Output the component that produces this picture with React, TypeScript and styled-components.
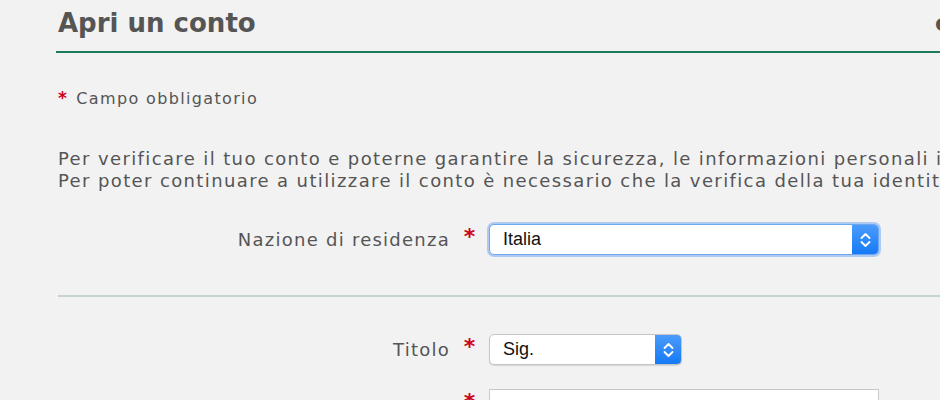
import styled, { createGlobalStyle } from "styled-components";

const GlobalStyle = createGlobalStyle`
  html, body {
    margin: 0;
    padding: 0;
    background: #f2f2f2;
    overflow: hidden;
  }
  body {
    font-family: "DejaVu Sans", Verdana, sans-serif;
    color: #555;
  }
`;

const Page = styled.div`
  width: 1100px;
  padding-left: 56px;
`;

const Header = styled.div`
  display: grid;
  grid-template-columns: 877px 1fr;
  align-items: start;
  height: 51px;
  border-bottom: 2px solid #1d7b5b;
  padding-left: 2px;
`;

const Title = styled.h1`
  margin: 8px 0 0;
  font-size: 26px;
  font-weight: bold;
  color: #555;
  white-space: nowrap;
`;

const Aside = styled.span`
  margin-top: 10px;
  font-size: 23px;
  font-weight: bold;
  color: #555;
  white-space: nowrap;
`;

const Content = styled.div`
  padding-left: 2px;
`;

const Star = styled.span`
  color: #d0021b;
  font-weight: bold;
  font-size: 17px;
  letter-spacing: 0;
  margin-right: 3px;
`;

const Required = styled.p`
  margin: 35px 0 0;
  font-size: 16px;
  line-height: 20px;
  letter-spacing: 1.35px;
`;

const Intro = styled.p`
  margin: 39px 0 0;
  font-size: 18px;
  line-height: 22px;
  letter-spacing: 1.38px;
  white-space: nowrap;
`;

const Row = styled.div<{ $top: number }>`
  display: grid;
  grid-template-columns: 392px 39px auto;
  align-items: center;
  margin-top: ${(p) => p.$top}px;
`;

const Label = styled.label`
  text-align: right;
  font-size: 18px;
  letter-spacing: 1.25px;
  color: #555;
  white-space: nowrap;
`;

const StarCell = styled.span`
  color: #d0021b;
  font-weight: bold;
  font-size: 22px;
  line-height: 22px;
  text-align: center;
  align-self: start;
  margin-top: 2px;
`;

const SelectBox = styled.div<{ $width: number; $focus?: boolean }>`
  display: flex;
  width: ${(p) => p.$width}px;
  height: 31px;
  box-sizing: border-box;
  background: #fff;
  border: 1px solid ${(p) => (p.$focus ? "#6fa6ef" : "#c6c6c6")};
  border-radius: 5px;
  box-shadow: ${(p) =>
    p.$focus
      ? "0 0 0 2px rgba(120,170,240,0.55)"
      : "0 1px 1px rgba(0,0,0,0.12)"};
  overflow: hidden;
  font-family: "Liberation Sans", Arial, sans-serif;
  font-size: 18px;
  color: #111;
`;

const SelectValue = styled.span`
  flex: 1;
  padding-left: 13px;
  line-height: 29px;
`;

const Arrow = styled.span`
  width: 26px;
  display: flex;
  align-items: center;
  justify-content: center;
  background: linear-gradient(#4b9bfb, #157af6);
`;

const Divider = styled.hr`
  margin: 40px 0 0;
  border: 0;
  height: 2px;
  background: #c5d4d0;
`;

const TextBox = styled.div`
  width: 390px;
  height: 32px;
  box-sizing: border-box;
  background: #fff;
  border: 1px solid #c9c9c9;
`;

const Chevrons = () => (
  <svg width="13" height="20" viewBox="0 0 13 20">
    <path
      d="M2.5 8 L6.5 4 L10.5 8 M2.5 12 L6.5 16 L10.5 12"
      fill="none"
      stroke="#fff"
      strokeWidth="1.8"
      strokeLinecap="round"
      strokeLinejoin="round"
    />
  </svg>
);

function App() {
  return (
    <Page>
      <GlobalStyle />
      <Header>
        <Title>Apri un conto</Title>
        <Aside>cambia lingua</Aside>
      </Header>
      <Content>
        <Required>
          <Star>*</Star> Campo obbligatorio
        </Required>
        <Intro>
          Per verificare il tuo conto e poterne garantire la sicurezza, le informazioni personali inserite saranno controllate.
          <br />
          Per poter continuare a utilizzare il conto è necessario che la verifica della tua identità venga completata.
        </Intro>
        <Row $top={32}>
          <Label>Nazione di residenza</Label>
          <StarCell>*</StarCell>
          <SelectBox $width={390} $focus>
            <SelectValue>Italia</SelectValue>
            <Arrow>
              <Chevrons />
            </Arrow>
          </SelectBox>
        </Row>
        <Divider />
        <Row $top={37}>
          <Label>Titolo</Label>
          <StarCell>*</StarCell>
          <SelectBox $width={193}>
            <SelectValue>Sig.</SelectValue>
            <Arrow>
              <Chevrons />
            </Arrow>
          </SelectBox>
        </Row>
        <Row $top={24}>
          <Label />
          <StarCell>*</StarCell>
          <TextBox />
        </Row>
      </Content>
    </Page>
  );
}

export default App;
